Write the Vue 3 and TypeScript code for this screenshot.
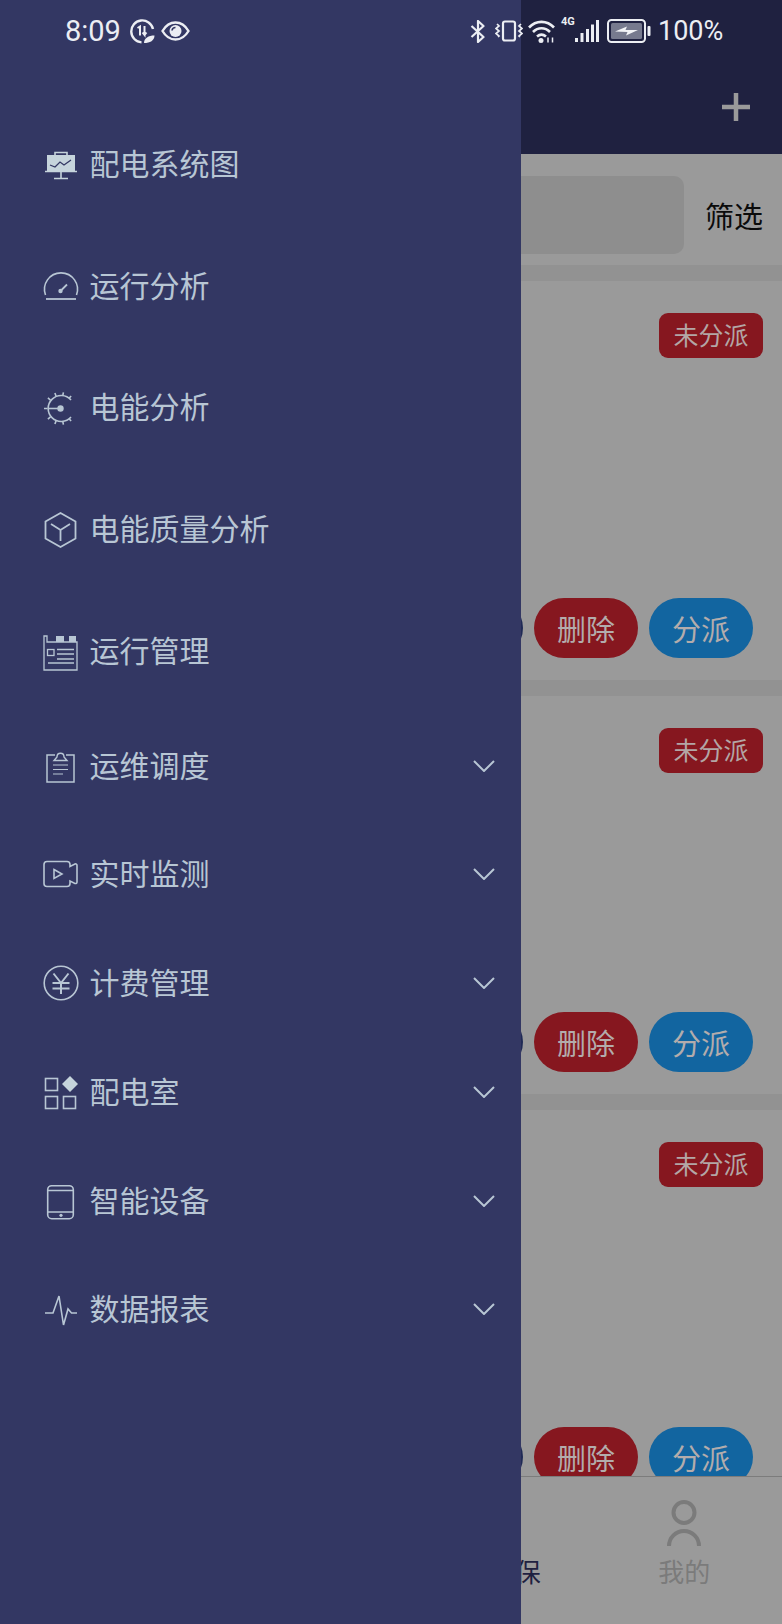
<script setup lang="ts">
interface MenuItem {
  label: string
  icon: string
  tall: boolean
  arrow: boolean
}

const menu: MenuItem[] = [
  { label: '配电系统图', icon: 'board', tall: true, arrow: false },
  { label: '运行分析', icon: 'gauge', tall: true, arrow: false },
  { label: '电能分析', icon: 'dial', tall: true, arrow: false },
  { label: '电能质量分析', icon: 'cube', tall: true, arrow: false },
  { label: '运行管理', icon: 'news', tall: true, arrow: false },
  { label: '运维调度', icon: 'clip', tall: false, arrow: true },
  { label: '实时监测', icon: 'video', tall: false, arrow: true },
  { label: '计费管理', icon: 'yen', tall: false, arrow: true },
  { label: '配电室', icon: 'grid', tall: false, arrow: true },
  { label: '智能设备', icon: 'tablet', tall: false, arrow: true },
  { label: '数据报表', icon: 'pulse', tall: false, arrow: true },
]

const cards = [1, 2, 3]
const tabs = [
  { label: '首页', active: false },
  { label: '工单', active: false },
  { label: '安全环保', active: true },
  { label: '我的', active: false },
]

const dialTicks = [50, 80, 110, 140, 180, 220, 250, 280, 310]
  .map((deg) => {
    const a = (deg * Math.PI) / 180
    const c = Math.cos(a)
    const s = Math.sin(a)
    return `M${(17.5 + 13 * c).toFixed(1)} ${(19.5 + 13 * s).toFixed(1)}L${(17.5 + 16.5 * c).toFixed(1)} ${(19.5 + 16.5 * s).toFixed(1)}`
  })
  .join('')
</script>

<template>
  <div class="screen">
    <div class="page">
      <header class="topbar">
        <svg class="plus" width="30" height="30" viewBox="0 0 30 30">
          <path d="M15 1v28M1 15h28" stroke="#9a9a9a" stroke-width="4.5" fill="none" />
        </svg>
      </header>
      <div class="search">
        <div class="search-box"></div>
        <span class="filter">筛选</span>
      </div>
      <div class="list">
        <section v-for="c in cards" :key="c" class="card">
          <span class="badge">未分派</span>
          <div class="actions">
            <button class="btn btn-navy" aria-hidden="true"></button>
            <button class="btn btn-red">删除</button>
            <button class="btn btn-blue">分派</button>
          </div>
        </section>
      </div>
      <nav class="tabbar">
        <div v-for="t in tabs" :key="t.label" class="tab" :class="{ active: t.active }">
          <svg class="tab-icon" width="38" height="46" viewBox="0 0 38 46">
            <circle cx="19" cy="12.5" r="10.5" fill="none" stroke="#7b7b7b" stroke-width="4" />
            <path d="M4 46a15 15 0 0 1 30 0" fill="none" stroke="#7b7b7b" stroke-width="4" />
          </svg>
          <span>{{ t.label }}</span>
        </div>
      </nav>
    </div>

    <aside class="drawer">
      <div
        v-for="m in menu"
        :key="m.label"
        class="row"
        :class="m.tall ? 'row-tall' : 'row-short'"
      >
        <svg class="icon" width="36" height="36" viewBox="0 0 36 36" fill="none" stroke="#b8c6d4" stroke-width="1.6">
          <g v-if="m.icon === 'board'">
            <rect x="4" y="9" width="28" height="16" fill="#c6d4dc" stroke="none" />
            <path d="M2 25.5h32M12 9V6.5h12V9M18 26v6M11 32.5h14" stroke="#c6d4dc" stroke-width="1.6" />
            <path d="M7 19l5 2 5-5 4 3 7-5" stroke="#333763" stroke-width="1.3" />
          </g>
          <g v-else-if="m.icon === 'gauge'">
            <path d="M2.500 27a16.500 16.500 0 1 1 31 0" />
            <path d="M3 31h30" stroke-width="1.800" />
            <path d="M17.500 23l6.500-6.500" stroke-width="1.800" />
            <circle cx="17.500" cy="23" r="2.200" fill="#b8c6d4" stroke="none" />
          </g>
          <g v-else-if="m.icon === 'dial'">
            <path d="M28 11A13 13 0 1 0 28 28" />
            <path :d="dialTicks" />
            <path d="M5 19.500H17.500" />
            <circle cx="17.500" cy="19.500" r="3.200" fill="#b8c6d4" stroke="none" />
          </g>
          <g v-else-if="m.icon === 'cube'">
            <path d="M17.500 2l15 8.500v17l-15 8.500-15-8.500v-17z" stroke-width="1.800" />
            <path d="M8 13l9.500 6 9.500-6M17.500 19v11" stroke-width="1.800" />
          </g>
          <g v-else-if="m.icon === 'news'">
            <path d="M1 3v34h33V9H4V3z" stroke-width="1.300" />
            <path d="M13 3h8v6h-8zM26 3h7v6h-7z" fill="#b8c6d4" stroke="none" />
            <rect x="4.500" y="16.500" width="6.500" height="6" stroke-width="1.300" />
            <path d="M14 16.500h17M14 21h17M14 26h17M5 30h26" stroke-width="1.400" />
          </g>
          <g v-else-if="m.icon === 'clip'">
            <path d="M12 7H4v27h27V7h-8" stroke-width="1.500" />
            <path d="M11 12.500h13l-3-3.500c0-5-7-5-7 0z" stroke-width="1.400" />
            <path d="M10 17h15M10 21.500h15M10 26h10" stroke-width="1.200" />
          </g>
          <g v-else-if="m.icon === 'video'">
            <path d="M4 5.500h20a3 3 0 0 1 3 3v2l5-2.500c1-.4 2 .2 2 1.400V26c0 1.200-1 1.800-2 1.400L27 25v2.500a3 3 0 0 1-3 3H4a3 3 0 0 1-3-3v-19a3 3 0 0 1 3-3z" />
            <path d="M11 13.500l8 4.500-8 4.500z" />
          </g>
          <g v-else-if="m.icon === 'yen'">
            <circle cx="18" cy="18" r="16.800" />
            <path d="M10.500 8.500L18 18l7.500-9.500M9.500 18h17M9.500 23.500h17M18 18v11" stroke-width="2" />
          </g>
          <g v-else-if="m.icon === 'grid'">
            <rect x="2.500" y="4.500" width="12" height="12" />
            <rect x="2.500" y="22.500" width="12" height="12" />
            <rect x="20.500" y="22.500" width="12" height="12" />
            <path d="M27 2l8 8-8 8-8-8z" fill="#c6d4dc" stroke="none" />
          </g>
          <g v-else-if="m.icon === 'tablet'">
            <rect x="4.700" y="2.700" width="25.600" height="33" rx="4" />
            <path d="M5 7.500h25M5 29h25" />
            <circle cx="18" cy="32.300" r="1.600" fill="#b8c6d4" stroke="none" />
          </g>
          <g v-else-if="m.icon === 'pulse'">
            <path d="M2 22h8l6-17 4.500 29L25 18l3.500 4H34" />
          </g>
        </svg>
        <span class="label">{{ m.label }}</span>
        <svg v-if="m.arrow" class="chevron" width="22" height="12" viewBox="0 0 22 12">
          <path d="M1 1l10 10L21 1" fill="none" stroke="#b8c6d4" stroke-width="2" />
        </svg>
      </div>
    </aside>

    <div class="status">
      <div class="status-left">
        <span class="time">8:09</span>
        <svg class="s1" width="25" height="25" viewBox="0 0 25 25" fill="none" stroke="#eceef3" stroke-width="2.400">
          <path d="M23 10A11 11 0 1 0 11.500 23.400" />
          <path d="M7.500 9l2.500-1.500V16.500M14.500 7v9l-2-2.500M14.500 16l2-2.500" stroke-width="2" />
          <path d="M14 24c0-5 4.500-7.500 10.500-7.500 0 5-4.500 7.500-10.500 7.500z" fill="#eceef3" stroke="none" />
        </svg>
        <svg class="s2" width="29" height="20" viewBox="0 0 29 20">
          <path d="M1.500 10C5 4 9.500 1.500 14.500 1.500S24 4 27.500 10C24 16 19.500 18.500 14.500 18.500S5 16 1.500 10z" fill="none" stroke="#eceef3" stroke-width="2.400" />
          <circle cx="14.500" cy="10" r="6" fill="#eceef3" />
          <path d="M11 9.500a3.500 3.500 0 0 1 3.500-3" stroke="#333763" stroke-width="1.600" fill="none" />
        </svg>
      </div>
      <div class="status-right">
        <svg width="16" height="23" viewBox="0 0 16 23" fill="none" stroke="#eceef3" stroke-width="2.200">
          <path d="M1.500 6l12 11-5.500 5V1l5.500 5-12 11" stroke-linejoin="round" />
        </svg>
        <svg class="gap-vib" width="28" height="22" viewBox="0 0 28 22" fill="none" stroke="#eceef3" stroke-width="2.200">
          <rect x="8" y="1.500" width="12" height="19" rx="2" />
          <path d="M2 4l2 2-3 2.500 3 2.500-3 2.500 3 2.500-1 1M26 4l-2 2 3 2.500-3 2.500 3 2.500-3 2.500 1 1" stroke-width="1.700" />
        </svg>
        <svg class="gap-wifi" width="27" height="23" viewBox="0 0 27 23" fill="none" stroke="#eceef3" stroke-width="2.600">
          <path d="M1 7.500c7-7.500 18-7.500 25 0M5 12c5-5 12-5 17 0M9 16.500c3-2.500 6-2.500 9 0" />
          <circle cx="13" cy="20.500" r="2.500" fill="#eceef3" stroke="none" />
          <path d="M20 17.500v5M24.500 17.500v5" stroke-width="1.500" />
        </svg>
        <span class="net">4G</span>
        <svg class="gap-sig" width="24" height="23" viewBox="0 0 24 23" fill="#eceef3">
          <rect x="0" y="18" width="3" height="4" />
          <rect x="5.500" y="13" width="3" height="9" />
          <rect x="11" y="9" width="3" height="13" />
          <rect x="16" y="4.500" width="3" height="17.500" />
          <rect x="21" y="0" width="3" height="22" />
        </svg>
        <svg class="gap-bat" width="44" height="24" viewBox="0 0 44 24">
          <rect x="1" y="1" width="37" height="22" rx="3.500" fill="none" stroke="#eceef3" stroke-width="2" />
          <rect x="4" y="4" width="31" height="16" rx="1.500" fill="#777a8e" />
          <path d="M8 12.500L20 7.500 18.500 11 31 11 19 16.500 20.500 13z" fill="#f2f3f6" />
          <rect x="40.500" y="7" width="3" height="10" rx="1" fill="#eceef3" />
        </svg>
        <span class="pct">100%</span>
      </div>
    </div>
  </div>
</template>

<style scoped>
.screen {
  position: relative;
  width: 782px;
  height: 1624px;
  overflow: hidden;
  font-family: "Noto Sans CJK SC", "Noto Sans", sans-serif;
}
.page {
  display: flex;
  flex-direction: column;
  height: 100%;
  background: #9a9a9a;
}
.topbar {
  display: flex;
  justify-content: flex-end;
  align-items: flex-start;
  flex: none;
  height: 154px;
  padding: 92px 31px 0 0;
  box-sizing: border-box;
  background: #1f2140;
}
.search {
  display: flex;
  align-items: center;
  flex: none;
  height: 111px;
  padding: 22px 19px 11px 0;
  box-sizing: border-box;
}
.search-box {
  flex: 1;
  height: 78px;
  border-radius: 10px;
  background: #8e8e8e;
}
.filter {
  margin-left: 21px;
  font-size: 29px;
  line-height: 40px;
  color: #0b0b0b;
}
.list {
  flex: 1;
  min-height: 0;
  overflow: hidden;
  display: flex;
  flex-direction: column;
  gap: 16px;
  padding-top: 16px;
  background: #929292;
}
.card {
  flex: none;
  display: flex;
  flex-direction: column;
  align-items: flex-end;
  height: 398.500px;
  padding: 32px 19px 22px 0;
  box-sizing: border-box;
  background: #9a9a9a;
}
.badge {
  width: 104px;
  height: 45px;
  line-height: 43px;
  text-align: center;
  font-size: 25px;
  border-radius: 9px;
  background: #86171f;
  color: #b3a6a6;
}
.actions {
  display: flex;
  gap: 11px;
  margin-top: auto;
  padding-right: 10px;
}
.btn {
  width: 104px;
  height: 60px;
  padding: 0;
  border: none;
  border-radius: 30px;
  font: inherit;
  font-size: 29px;
  color: #b3acac;
}
.btn-navy { background: #1f2a55; }
.btn-red { background: #86171f; }
.btn-blue { background: #1265a0; }
.tabbar {
  flex: none;
  display: grid;
  grid-template-columns: repeat(4, 1fr);
  height: 148px;
  box-sizing: border-box;
  border-top: 1px solid #7c7c7c;
  background: #9a9a9a;
}
.tab {
  display: flex;
  flex-direction: column;
  align-items: center;
  padding-top: 23px;
  font-size: 26px;
  line-height: 34px;
  color: #7b7b7b;
}
.tab-icon { margin-bottom: 8px; }
.tab.active { color: #1f2140; }

.drawer {
  position: absolute;
  top: 0;
  left: 0;
  bottom: 0;
  width: 521px;
  padding-top: 103px;
  box-sizing: border-box;
  background: #333763;
}
.row {
  display: flex;
  align-items: center;
  padding: 0 26px 0 43px;
  color: #b8c6d4;
}
.row-tall { height: 121.700px; }
.row-short { height: 108.700px; }
.icon { flex: none; overflow: visible; }
.label {
  margin: 0 0 4px 10.500px;
  font-size: 30px;
  line-height: 40px;
}
.chevron { margin-left: auto; }

.status {
  position: absolute;
  top: 0;
  left: 0;
  right: 0;
  display: flex;
  justify-content: space-between;
  align-items: center;
  height: 62px;
  padding: 0 61px 0 65px;
  box-sizing: border-box;
  font-family: Roboto, "Noto Sans", sans-serif;
  color: #eceef3;
}
.status-left, .status-right {
  display: flex;
  align-items: center;
}
.time {
  font-size: 29px;
  font-weight: 400;
}
.s1 { margin-left: 9px; }
.s2 { margin-left: 6px; }
.gap-vib { margin-left: 9px; }
.gap-wifi { margin-left: 5px; }
.net {
  width: 14px;
  margin: 0 0 19px 6px;
  font-size: 11px;
  line-height: 12px;
  font-weight: 700;
}
.gap-bat { margin-left: 8px; }
.pct {
  width: 63px;
  margin-left: 7px;
  font-size: 27px;
  font-weight: 400;
  white-space: nowrap;
}
</style>
